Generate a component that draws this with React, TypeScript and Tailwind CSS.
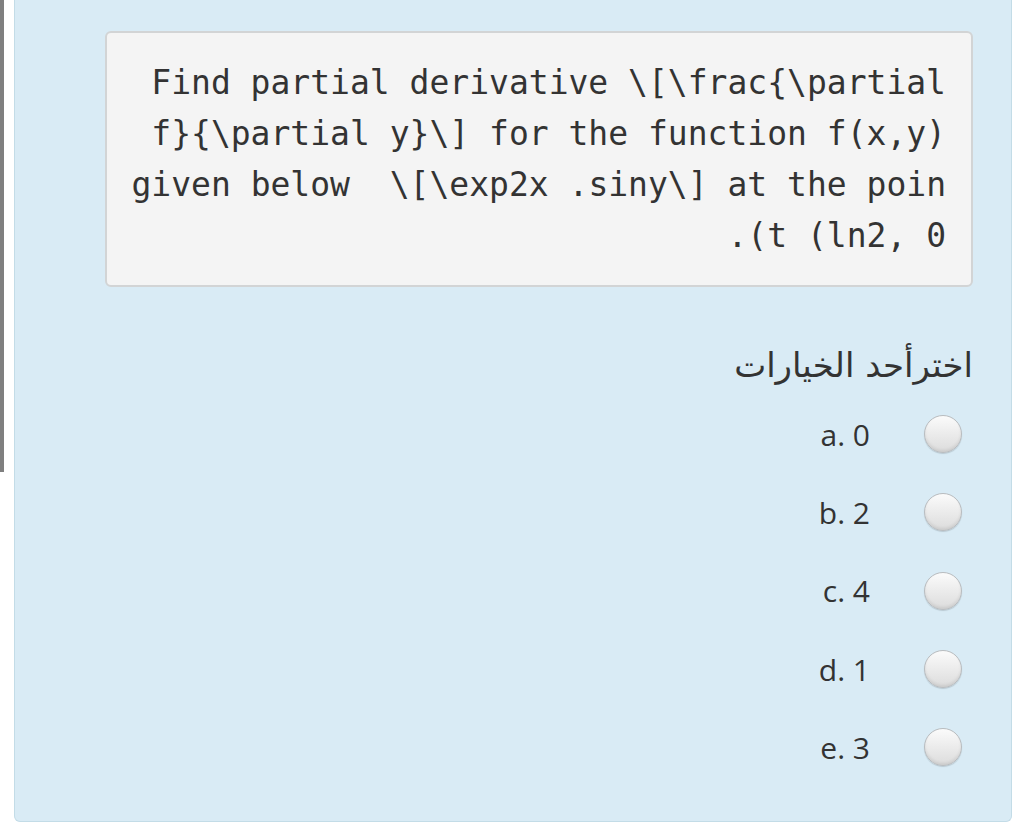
import React from 'react';

const lines = [
  'Find partial derivative \\[\\frac{\\partial',
  'f}{\\partial y}\\] for the function f(x,y)',
  'given below  \\[\\exp2x .siny\\] at the poin',
  '.(t (ln2, 0',
];

const options = [
  { key: 'a', value: '0' },
  { key: 'b', value: '2' },
  { key: 'c', value: '4' },
  { key: 'd', value: '1' },
  { key: 'e', value: '3' },
];

function Radio() {
  return (
    <span className="block h-[38px] w-[38px] rounded-full border border-[#b9bcbf] bg-gradient-to-b from-[#fbfbfb] to-[#dcdcdc] shadow-[inset_0_-2px_3px_rgba(0,0,0,0.08),0_1px_1px_rgba(0,0,0,0.15)]" />
  );
}

export default function App() {
  return (
    <div className="flex h-[825px] w-[1019px] overflow-hidden bg-white">
      <div className="h-[472px] w-[4px] shrink-0 bg-[#7f7f7f]" />
      <div className="ml-[10px] flex h-[822px] w-[998px] shrink-0 flex-col rounded-b-md border-x border-b border-[#c3dce7] bg-[#d9ebf5] pt-[31px]">
        <div className="ml-[90px] mr-[38px] rounded-md border-2 border-[#d2d4d5] bg-[#f4f4f4] pb-[24px] pr-[25px] pt-[24px]">
          {lines.map((line) =>
          <div
            key={line}
            className="whitespace-pre text-right text-[33px] leading-[51px] text-[#333]"
            style={{ fontFamily: '"DejaVu Sans Mono", monospace' }}>
            
              {line}
            </div>
          )}
        </div>

        <div
          dir="rtl"
          className="mr-[38px] mt-[56px] text-right text-[34px] leading-[44px] text-[#333]"
          style={{ fontFamily: '"DejaVu Sans", sans-serif' }}>
          
          اخترأحد الخيارات
        </div>

        <div className="mr-[49px] mt-[8px] flex flex-col items-end">
          {options.map((o) =>
          <div key={o.key} className="flex h-[78.3px] items-center gap-[54px]">
              <span
              className="text-[30px] text-[#333]"
              style={{ fontFamily: '"Open Sans", sans-serif' }}>
              
                {o.key}. {o.value}
              </span>
              <Radio />
            </div>
          )}
        </div>
      </div>
    </div>);

}
